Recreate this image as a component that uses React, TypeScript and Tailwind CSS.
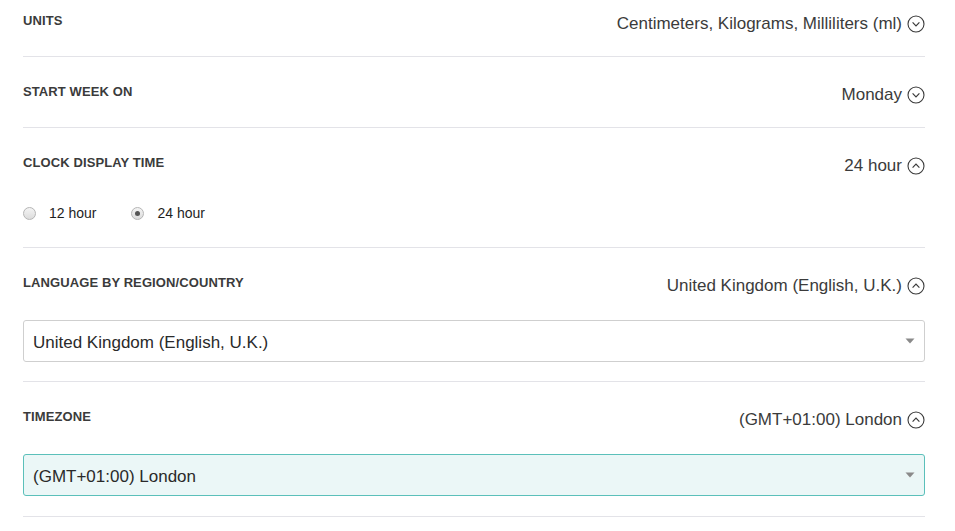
import React, { useState } from "react";

function ChevronCircle({ up }: { up?: boolean }) {
  return (
    <svg width="18" height="18" viewBox="0 0 18 18" className="shrink-0">
      <circle cx="9" cy="9" r="8" fill="none" stroke="#3a3a3a" strokeWidth="1.1" />
      {up ? (
        <path d="M5.6 10.6 L9 7.2 L12.4 10.6" fill="none" stroke="#3a3a3a" strokeWidth="1.2" />
      ) : (
        <path d="M5.6 7.4 L9 10.8 L12.4 7.4" fill="none" stroke="#3a3a3a" strokeWidth="1.2" />
      )}
    </svg>
  );
}

function RowHeader({ label, value, open }: { label: string; value: string; open?: boolean }) {
  return (
    <div className="flex items-start justify-between">
      <div className="mt-[1px] text-[13px] leading-4 font-bold text-[#3b3b3b] tracking-[0.1px]">{label}</div>
      <div className="mt-[2px] flex items-center gap-[5px] h-5">
        <span className="text-[17px] leading-5 text-[#3b3b3b]">{value}</span>
        <ChevronCircle up={open} />
      </div>
    </div>
  );
}

function Select({ value, active }: { value: string; active?: boolean }) {
  return (
    <div
      className={
        active
          ? "mt-[24px] h-[42px] rounded-[3px] border border-[#5bc0ba] bg-[#ebf7f7] flex items-center justify-between pl-[9px] pr-[9px]"
          : "mt-[24px] h-[42px] rounded-[3px] border border-[#cfcfcf] bg-white flex items-center justify-between pl-[9px] pr-[9px]"
      }
    >
      <span className="pt-[4px] text-[17px] leading-5 text-[#2a2a2a]">{value}</span>
      <svg width="10" height="6" viewBox="0 0 10 6">
        <path d="M0.5 0.5 L9.5 0.5 L5 5.5 Z" fill="#8a8a8a" />
      </svg>
    </div>
  );
}

function Radio({ checked, label, onClick }: { checked: boolean; label: string; onClick: () => void }) {
  return (
    <button type="button" onClick={onClick} className="flex items-center gap-[13px]">
      <span className="w-[13px] h-[13px] rounded-full border border-[#b5b5b5] bg-gradient-to-b from-[#f4f4f4] to-[#dcdcdc] flex items-center justify-center">
        {checked && <span className="w-[5px] h-[5px] rounded-full bg-[#555]" />}
      </span>
      <span className="text-[14px] text-[#1e1e1e]">{label}</span>
    </button>
  );
}

export default function App() {
  const [clock, setClock] = useState("24");

  return (
    <div className="w-[955px] h-[531px] bg-white overflow-hidden font-['Liberation_Sans',Arial,sans-serif]">
      <div className="ml-[23px] w-[902px]">
        <div className="pt-[12px] pb-[22px] border-b border-[#e3e3e8]">
          <RowHeader label="UNITS" value="Centimeters, Kilograms, Milliliters (ml)" />
        </div>

        <div className="pt-[26px] pb-[22px] border-b border-[#e3e3e8]">
          <RowHeader label="START WEEK ON" value="Monday" />
        </div>

        <div className="pt-[26px] pb-[23px] border-b border-[#e3e3e8]">
          <RowHeader label="CLOCK DISPLAY TIME" value={clock === "24" ? "24 hour" : "12 hour"} open />
          <div className="mt-[27px] h-[21px] flex items-center gap-[35px]">
            <Radio checked={clock === "12"} label="12 hour" onClick={() => setClock("12")} />
            <Radio checked={clock === "24"} label="24 hour" onClick={() => setClock("24")} />
          </div>
        </div>

        <div className="pt-[26px] pb-[19px] border-b border-[#e3e3e8]">
          <RowHeader label="LANGUAGE BY REGION/COUNTRY" value="United Kingdom (English, U.K.)" open />
          <Select value="United Kingdom (English, U.K.)" />
        </div>

        <div className="pt-[26px] pb-[20px] border-b border-[#e3e3e8]">
          <RowHeader label="TIMEZONE" value="(GMT+01:00) London" open />
          <Select value="(GMT+01:00) London" active />
        </div>
      </div>
    </div>
  );
}
